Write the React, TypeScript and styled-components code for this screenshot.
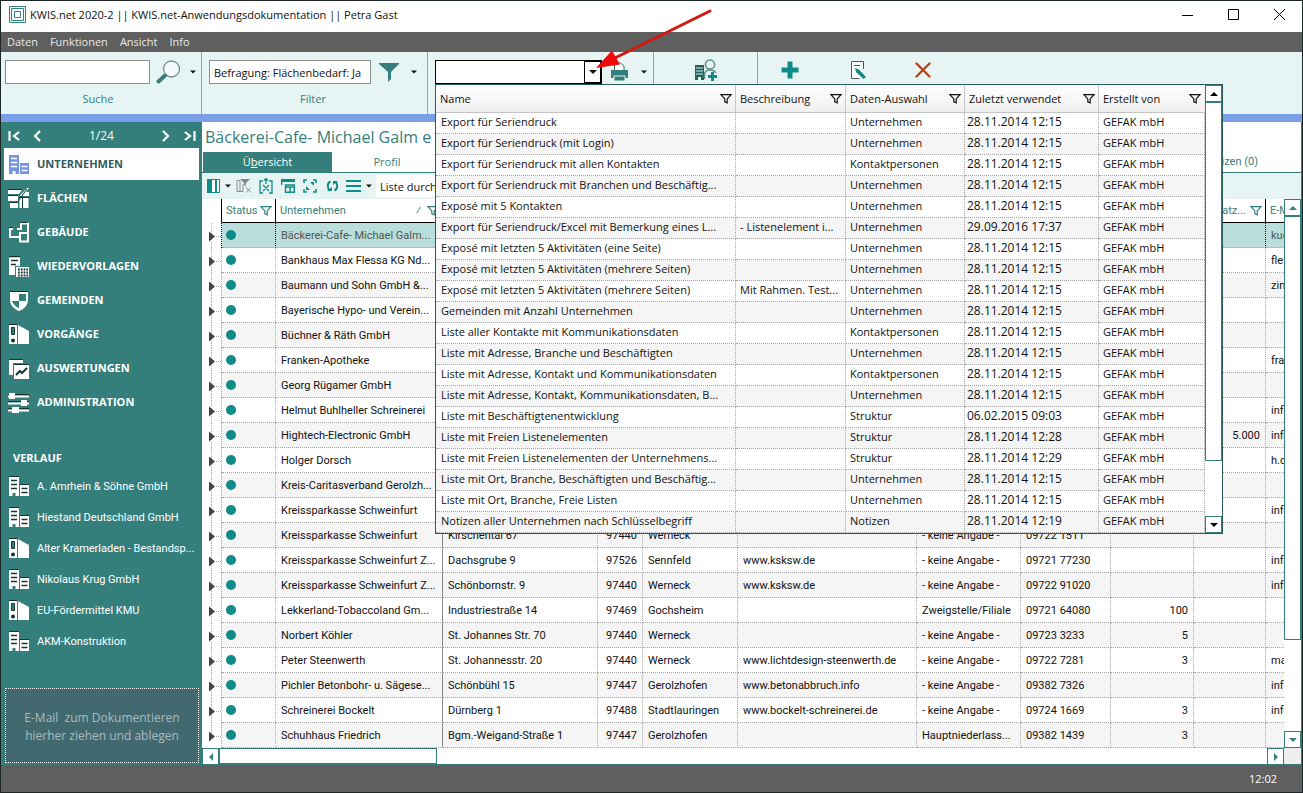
import React from 'react';
import styled, { createGlobalStyle, css } from 'styled-components';

const teal = '#347f7c';
const accent = '#108c88';
const pale = '#e6f5f4';

const Global = createGlobalStyle`
  * { box-sizing: border-box; }
  body { margin: 0; font: 11px/16px 'Open Sans', 'Noto Sans', sans-serif; color: #111; background: #fff; }
  button, input { font: inherit; color: inherit; margin: 0; padding: 0; border: 0; background: none; border-radius: 0; }
  button { cursor: pointer; display: flex; align-items: center; justify-content: center; }
  input:focus { outline: none; }
  svg { display: block; flex: none; }
`;

const Window = styled.div`
  display: flex;
  flex-direction: column;
  min-height: 100vh;
  border: 1px solid #1c2626;
  overflow: hidden;
`;

/* ---------- title and menu ---------- */
const TitleBar = styled.header`
  display: flex;
  align-items: center;
  height: 31px;
  padding: 0 0 4px 8px;
  background: #fff;
`;
const AppTitle = styled.h1`
  flex: 1;
  margin: 0 0 0 4px;
  font-size: 11px;
  font-weight: 400;
`;
const WindowButton = styled.button`
  width: 46px;
  height: 27px;
`;
const MenuBar = styled.nav`
  display: flex;
  align-items: center;
  gap: 12px;
  height: 20px;
  padding-left: 6px;
  background: #5f5f5f;
  color: #e8e8e8;
`;

/* ---------- ribbon ---------- */
const Ribbon = styled.div`
  display: flex;
  height: 62px;
  background: ${pale};
`;
const Group = styled.section<{ $w?: number; $pad?: number }>`
  display: flex;
  flex-direction: column;
  width: ${p => (p.$w ? p.$w + 'px' : 'auto')};
  padding: 8px 0 0 ${p => p.$pad ?? 0}px;
  border-right: ${p => (p.$w ? '1px solid #8fa5a4' : 'none')};
`;
const Controls = styled.div<{ $center?: boolean }>`
  display: flex;
  align-items: center;
  justify-content: ${p => (p.$center ? 'center' : 'flex-start')};
  height: 24px;
`;
const GroupLabel = styled.label`
  padding-right: 10px;
  line-height: 29px;
  text-align: center;
  color: ${teal};
`;
const Field = styled.input<{ $w: number }>`
  width: ${p => p.$w}px;
  height: 24px;
  padding: 0 4px;
  border: 1px solid #8a8f8f;
  background: #fff;
`;
const ToolButton = styled.button<{ $w: number }>`
  width: ${p => p.$w}px;
  height: 24px;
`;
const ActionButton = styled(ToolButton)`
  height: 20px;
  margin-bottom: 4px;
`;
const Combo = styled.div`
  position: relative;
  display: flex;
  width: 167px;
  height: 24px;
  border: 1px solid #000;
  background: #fff;
`;
const ComboInput = styled.input`
  flex: 1;
  min-width: 0;
  padding: 0 4px;
`;
const ComboButton = styled.button`
  width: 17px;
  border: 1px solid #000;
`;
const Pointer = styled.svg`
  position: absolute;
  left: 157px;
  top: -53px;
  z-index: 3;
  pointer-events: none;
`;
const Strip = styled.div`
  height: 8px;
  background: #7a9ee8;
`;

/* ---------- drop-down list ---------- */
const Popup = styled.div`
  position: absolute;
  left: -1px;
  top: 23px;
  z-index: 2;
  display: flex;
  width: 788px;
  border: 1px solid #2a5c5d;
  background: #fff;
`;
const ListTable = styled.table`
  flex: 1;
  table-layout: fixed;
  border-collapse: separate;
  border-spacing: 0;
`;
const ListHead = styled.th`
  height: 28px;
  padding: 0 3px 0 4px;
  border-right: 1px solid #c8c8c8;
  border-bottom: 1px solid #c4c4c4;
  background: linear-gradient(#fff, #f0f0f0);
  font-weight: 400;
  text-align: left;
  &:last-child { border-right-color: #eee; }
`;
const HeadInner = styled.span<{ $end?: boolean }>`
  display: flex;
  align-items: center;
  justify-content: ${p => (p.$end ? 'flex-end' : 'space-between')};
  gap: ${p => (p.$end ? 4 : 0)}px;
`;
const ListRow = styled.tr`
  &:nth-child(even) { background: #f5f5f5; }
`;
const ListCell = styled.td<{ $date?: boolean; $first?: boolean }>`
  height: 21px;
  padding: 0 0 2px ${p => (p.$date ? 2 : p.$first ? 5 : 4)}px;
  border-right: 1px dotted #a5a5a5;
  border-bottom: 1px dotted #a5a5a5;
  font-size: ${p => (p.$date ? 12 : 11)}px;
  line-height: 18px;
  white-space: nowrap;
  overflow: hidden;
`;

/* ---------- scroll bars ---------- */
const VBar = styled.div<{ $c: string }>`
  display: flex;
  flex-direction: column;
  flex: none;
  width: 17px;
  color: ${p => p.$c};
  background: #fff;
`;
const HBar = styled.div`
  display: flex;
  flex: 1;
  color: ${teal};
`;
const BarButton = styled.button`
  width: 17px;
  height: 17px;
  flex: none;
  border: 1px solid ${teal};
  background: #fff;
`;
const Thumb = styled.div<{ $w?: number; $h?: number }>`
  width: ${p => (p.$w ? p.$w + 'px' : 'auto')};
  height: ${p => (p.$h ? p.$h + 'px' : 'auto')};
  border: 1px solid ${teal};
  background: #fff;
`;
const Fill = styled.div`
  flex: 1;
`;

/* ---------- side bar ---------- */
const Body = styled.div`
  display: flex;
  flex: 1;
`;
const Sidebar = styled.aside`
  display: flex;
  flex-direction: column;
  flex: none;
  width: 201px;
  padding: 0 3px 2px;
  background: ${teal};
  color: #fff;
`;
const Pager = styled.div`
  display: flex;
  align-items: center;
  height: 27px;
  padding: 0 2px;
  margin-bottom: -1px;
`;
const PagerButton = styled.button`
  width: 28px;
  height: 20px;
  &:first-child, &:last-child { width: 15px; }
`;
const PageCount = styled.span`
  flex: 1;
  text-align: center;
  font-size: 12px;
`;
const NavList = styled.ul`
  list-style: none;
  margin: 0;
  padding: 0;
`;
const NavLink = styled.a<{ $active?: boolean }>`
  display: flex;
  align-items: center;
  gap: 8px;
  height: 32px;
  margin-bottom: 2px;
  padding-left: 4px;
  font-weight: 700;
  text-decoration: none;
  color: ${p => (p.$active ? '#2f5c5b' : '#fff')};
  background: ${p => (p.$active ? '#fff' : 'transparent')};
`;
const HistoryTitle = styled.h2`
  margin: 30px 0 5px 9px;
  font-size: 11px;
  line-height: 16px;
`;
const HistoryLink = styled(NavLink)`
  height: 31px;
  margin: 0;
  font-family: Roboto, sans-serif;
  font-weight: 400;
  white-space: nowrap;
`;
const DropZone = styled.div`
  margin-top: auto;
  height: 75px;
  margin-left: 1px;
  padding-top: 20px;
  border: 1px dotted #fff;
  background: #42696f;
  color: #a9bcbe;
  font-size: 12px;
  line-height: 18px;
  text-align: center;
  white-space: pre-line;
`;

/* ---------- main area ---------- */
const Main = styled.main`
  display: flex;
  flex-direction: column;
  flex: 1;
  min-width: 0;
  border-right: 1px solid ${teal};
`;
const PageTitle = styled.h2`
  margin: 0;
  padding-left: 3px;
  font-size: 16px;
  font-weight: 400;
  line-height: 30px;
  color: ${teal};
`;
const Tabs = styled.div`
  display: flex;
  height: 21px;
  padding-left: 1px;
  border-bottom: 1px solid ${teal};
`;
const Tab = styled.button<{ $active?: boolean; $w: number; $last?: boolean }>`
  width: ${p => p.$w}px;
  height: 20px;
  color: ${p => (p.$active ? '#fff' : teal)};
  background: ${p => (p.$active ? teal : '#fff')};
  ${p => p.$last && css`
    margin-left: auto;
    margin-right: 43px;
    justify-content: flex-end;
    font-family: Roboto, sans-serif;
  `}
`;
const GridTools = styled.div`
  display: flex;
  align-items: center;
  height: 26px;
  padding-left: 4px;
  background: ${pale};
`;
const GridTool = styled.button<{ $w: number }>`
  width: ${p => p.$w}px;
  height: 22px;
`;
const ListSearch = styled.input`
  width: 200px;
  height: 22px;
  margin-left: 3px;
  padding-left: 4px;
  background: #fff;
`;
const GridArea = styled.div`
  display: flex;
  flex: 1;
`;
const GridClip = styled.div`
  flex: 1;
  min-width: 0;
  overflow: hidden;
`;
const Grid = styled.table`
  width: 100%;
  table-layout: fixed;
  border-collapse: separate;
  border-spacing: 0;
  font-family: Roboto, sans-serif;
`;
const GridHead = styled.th<{ $blank?: boolean }>`
  height: 24px;
  padding: 0 3px 0 4px;
  overflow: hidden;
  font-weight: 400;
  text-align: left;
  white-space: nowrap;
  color: ${teal};
  border-right: 1px solid #000;
  border-bottom: 1px solid ${p => (p.$blank ? '#fff' : '#000')};
  &:last-child { border-right: 0; }
`;
const Sort = styled.span`
  margin: 0 6px 0 auto;
`;
const GridRow = styled.tr<{ $selected?: boolean }>`
  background: ${p => (p.$selected ? '#b9dedb' : '#fff')};
  color: ${p => (p.$selected ? '#555' : '#111')};
  ${p => !p.$selected && css`&:nth-child(odd) { background: #f5f5f5; }`}
`;
const Cell = styled.td<{ $right?: boolean; $dark?: boolean; $solid?: boolean; $mark?: boolean }>`
  height: 25px;
  padding: ${p => (p.$mark ? '0 4px' : '2px 5px 0')};
  overflow: hidden;
  white-space: nowrap;
  text-align: ${p => (p.$right ? 'right' : 'left')};
  border-right: 1px ${p => (p.$solid ? 'solid #888' : p.$dark ? 'dotted #000' : 'dotted #a5a5a5')};
  border-bottom: 1px dotted #a5a5a5;
  &:last-child { border-right: 0; }
`;
const GutterCell = styled.td<{ $dark?: boolean }>`
  height: 25px;
  padding: 0;
  background: #fff;
  border-right: 1px dotted ${p => (p.$dark ? '#000' : '#a5a5a5')};
`;
const BottomBar = styled.div`
  display: flex;
  height: 17px;
  border-bottom: 1px solid ${teal};
`;
const Corner = styled.div`
  width: 17px;
  background: #eee;
`;
const StatusBar = styled.footer`
  display: flex;
  align-items: center;
  justify-content: flex-end;
  height: 27px;
  padding-right: 25px;
  background: #5f5f5f;
  color: #fff;
`;

/* ---------- icons ---------- */
const Caret = ({ dir = 'down', s = 7 }: { dir?: string; s?: number }) => {
  const d: Record<string, string> = { down: 'M0 2h8L4 6Z', up: 'M0 6h8L4 2Z', left: 'M6 0v8L2 4Z', right: 'M2 0v8l4-4Z' };
  return <svg width={s} height={s} viewBox="0 0 8 8"><path d={d[dir]} fill="currentColor" /></svg>;
};
const Funnel = ({ c = 'currentColor' }: { c?: string }) => (
  <svg width="12" height="11" viewBox="0 0 12 11" fill="none" stroke={c} strokeWidth="1.2">
    <path d="M1 1.700h10L7.2 5.900v3.900L4.8 8.8V5.900Z" />
  </svg>
);
const Logo = () => (
  <svg width="17" height="17" viewBox="0 0 17 17" fill="none" stroke={teal}>
    <path d="M.5.500h16v16H.5ZM2.500 2.500h12v12h-12ZM5.500 5.500h6v6h-6Z" />
  </svg>
);
const Magnifier = () => (
  <svg width="24" height="24" viewBox="0 0 24 24">
    <circle cx="15.500" cy="9" r="8" fill="#f4fafa" stroke="#7b8d8d" strokeWidth="1.300" />
    <path d="M9 15.500 2.500 21.500" stroke={teal} strokeWidth="4" strokeLinecap="round" />
  </svg>
);
const BigFunnel = () => (
  <svg width="20" height="19" viewBox="0 0 20 19"><path d="M0 0h20v1l-8 8v7l-3 3V9L0 1Z" fill={teal} /></svg>
);
const Printer = () => (
  <svg width="19" height="20" viewBox="0 0 19 20">
    <path d="M4.500 8V1h6l3.500 3v4" fill="#fff" stroke="#466" />
    <path d="M1 8h17v8H1Z" fill={teal} /><path d="M4 14h11v5H4Z" fill={teal} stroke="#e6f5f4" />
  </svg>
);
const AddContact = () => (
  <svg width="24" height="22" viewBox="0 0 24 22">
    <path d="M1 6h9v15H7v-3H4v3H1Z" fill="#2b5b5a" /><path d="M2 9h7M2 12h7M2 15h7" stroke="#8cc4c1" strokeWidth="1.300" />
    <circle cx="16" cy="5.500" r="4.600" fill="none" stroke="#5f8f8d" strokeWidth="1.500" />
    <path d="M10.500 20v-4c0-3 2-5 5.500-5 3 0 5 1 6 3" fill="none" stroke="#5f8f8d" strokeWidth="1.500" />
    <path d="M18.500 13v9M14 17.500h9" stroke={accent} strokeWidth="3" />
  </svg>
);
const Plus = () => (
  <svg width="18" height="18" viewBox="0 0 18 18"><path d="M9 .5v17M.5 9h17" stroke={accent} strokeWidth="5" /></svg>
);
const Edit = () => (
  <svg width="17" height="20" viewBox="0 0 17 20">
    <path d="M13.500 9V1.500h-12v17h8" fill="#f8ffff" stroke="#555" /><path d="M4 5.500h6" stroke="#555" />
    <path d="M5 8l4 1.500 7 7.500-2.500 2L6 12Z" fill={accent} />
  </svg>
);
const Cross = () => (
  <svg width="16" height="16" viewBox="0 0 16 16"><path d="m1.500 1.500 13 13m0-13-13 13" stroke="#b5451b" strokeWidth="2.400" strokeLinecap="round" /></svg>
);

const Ic = ({ children }: { children: React.ReactNode }) => (
  <svg width="21" height="21" viewBox="0 0 21 21" fill="none">{children}</svg>
);
const dark = '#173534';
const Buildings = ({ active }: { active?: boolean }) => {
  const body = active ? '#7496e2' : '#fff';
  const line = active ? '#fff' : dark;
  return (
    <Ic>
      <path d="M1 1h10v19H7.500v-3h-3v3H1ZM12 9h9v11h-9Z" fill={body} />
      <path d="M3 4.500h6M3 8.500h6M3 12.500h6M13.500 12.500h6M13.500 16.500h6" stroke={line} strokeWidth="1.500" />
      {!active && <path d="M1 .5h10M12 8.500h9" stroke={dark} />}
    </Ic>
  );
};
const Areas = () => (
  <Ic>
    <path d="M0 2h14l-3 4H0ZM0 8h10v5H0ZM2 15h8v5H2ZM11.500 10h9v10h-9ZM11.500 8 19 0h2L18 4h3v4Z" fill="#fff" />
    <path d="M0 1.500h14M0 7.500h10M2 14.500h8M11 9.500h10M14.500 8.500v12M10 13l9-12" stroke={dark} />
  </Ic>
);
const Floorplan = () => (
  <Ic>
    <path d="M5 7H2v8h10v4.500h8V11M9 7h4V1.500h7V12M12 15v-4h8" stroke="#fff" strokeWidth="2" />
    <path d="M1 5.500h4M12 .5h8" stroke={dark} />
  </Ic>
);
const Reminder = () => (
  <Ic>
    <path d="M1 1h11v9H7v9H1Z" fill="#fff" /><path d="M1 .5h11M3 4.500h7M3 8.500h5" stroke={dark} strokeWidth="1.500" />
    <path d="M8 11h13v10H8Z" fill="#fff" />
    <path d="M10 13.500h10M10 16.500h10M10 19.500h10" stroke={dark} strokeWidth="1.800" strokeDasharray="1.800 1" />
  </Ic>
);
const Shield = () => (
  <Ic>
    <path d="M2 2h18v8c0 5-4 9-9 11-5-2-9-6-9-11Z" fill="#fff" />
    <path d="M11 4h7v7h-7v7c-3-1-6-4-7-7h7Z" fill={teal} /><path d="M2 1.500h18" stroke={dark} />
  </Ic>
);
const Binder = () => (
  <Ic>
    <path d="M1 1h8v19H1Z" fill="#fff" /><path d="M10 1l11 6v13H10Z" fill="#fff" />
    <path d="M3.500 3.500h3v7h-3Z" fill={teal} stroke={dark} /><circle cx="5" cy="16.500" r="2" fill={dark} /><path d="M1 .5h8" stroke={dark} />
  </Ic>
);
const Reports = () => (
  <Ic>
    <path d="M1 2h14v3H5v12H1Z" fill="#fff" /><path d="M6 7h15v14H6Z" fill="#fff" />
    <path d="m8 17 4-4 2 2 5-5" stroke={dark} strokeWidth="2" /><path d="M1 1.500h14M6 6.500h15" stroke={dark} />
  </Ic>
);
const Sliders = () => (
  <Ic>
    <path d="M0 4.500h21M0 11.500h21M0 18.500h21" stroke="#fff" strokeWidth="2" />
    <path d="M0 2.500h21M0 9.500h21M0 16.500h21" stroke={dark} />
    <path d="M1 1h6v6H1ZM13 8h6v6h-6ZM4 15h7v6H4Z" fill="#fff" />
  </Ic>
);

const ColumnsIcon = () => (
  <svg width="13" height="14" viewBox="0 0 13 14"><path d="M.5.500h12v13H.5Z" fill="#fff" stroke={accent} /><path d="M0 0h5v14H0ZM8 0h2v14H8Z" fill={accent} /></svg>
);
const ClearFilter = () => (
  <svg width="16" height="14" viewBox="0 0 16 14" fill="none" stroke="#888"><path d="M4 1.500H1v11h3v-11M7 5v7.500h-3" /><path d="M4 0h10l-4 4v3l-2-1V4Z" fill="#888" stroke="none" /><path d="m10 8.500 5 5m0-5-5 5" /></svg>
);
const ExcelIcon = () => (
  <svg width="14" height="16" viewBox="0 0 14 16" fill="none" stroke={accent} strokeWidth="1.300"><path d="M4 3H1v12h3M10 3h3v12h-3M7 0v6M5 2.500l2-2 2 2M4 7l6 6m0-6-6 6" /></svg>
);
const LayoutIcon = () => (
  <svg width="14" height="14" viewBox="0 0 14 14" fill="none" stroke={accent}><path d="M0 0h14v3H0Z" fill={accent} stroke="none" /><path d="M.7.700h12.600M.7 0v6M4.500 13.300V6h8.800v7.300ZM4 8h9M9 8v5" strokeWidth="1.400" /></svg>
);
const ExpandIcon = () => (
  <svg width="14" height="14" viewBox="0 0 14 14"><path d="M1 4V1h3M10 1h3v3M13 10v3h-3M4 13H1v-3" fill="none" stroke={accent} strokeWidth="1.600" /><path d="M7 3h4v4ZM3 7v4h4Z" fill={accent} /></svg>
);
const RefreshIcon = () => (
  <svg width="13" height="14" viewBox="0 0 13 14" fill="none" stroke={accent} strokeWidth="2"><path d="M4.500 2.500C1 4 1 9 4 11.500M8.500 11.500C12 10 12 5 9 2.500" /><path d="M1 12h5V8ZM12 2H7v4Z" fill={accent} stroke="none" /></svg>
);
const ListIcon = () => (
  <svg width="15" height="12" viewBox="0 0 15 12"><path d="M0 1h15M0 6h15M0 11h15" stroke={accent} strokeWidth="2" /></svg>
);
const Dot = () => <svg width="10" height="10" viewBox="0 0 10 10" role="img" aria-label="aktiv"><circle cx="5" cy="5" r="5" fill={accent} /></svg>;
const TreeNode = ({ last }: { last?: boolean }) => (
  <svg width="19" height="25" viewBox="0 0 19 25">
    <path d={last ? 'M9.500 0v13' : 'M9.500 0v25'} stroke="#aaa" strokeDasharray="1 1" />
    <path d="M14 13.500h5" stroke="#aaa" strokeDasharray="1 1" /><path d="M7 8.500v10l6-5Z" fill="#444" />
  </svg>
);
const Chevron = ({ d }: { d: string }) => (
  <svg width="12" height="12" viewBox="0 0 12 12"><path d={d} fill="none" stroke="#fff" strokeWidth="2.200" /></svg>
);

/* ---------- data ---------- */
const nav: [string, React.ReactNode][] = [
  ['UNTERNEHMEN', <Buildings active />], ['FLÄCHEN', <Areas />], ['GEBÄUDE', <Floorplan />], ['WIEDERVORLAGEN', <Reminder />],
  ['GEMEINDEN', <Shield />], ['VORGÄNGE', <Binder />], ['AUSWERTUNGEN', <Reports />], ['ADMINISTRATION', <Sliders />],
];
const history: [string, React.ReactNode][] = [
  ['A. Amrhein & Söhne GmbH', <Buildings />], ['Hiestand Deutschland GmbH', <Buildings />],
  ['Alter Kramerladen - Bestandsp...', <Binder />], ['Nikolaus Krug GmbH', <Buildings />],
  ['EU-Fördermittel KMU', <Binder />], ['AKM-Konstruktion', <Buildings />],
];
const U = 'Unternehmen';
const D = '28.11.2014 12:15';
const lists: [string, string, string, string][] = [
  ['Export für Seriendruck', '', U, D],
  ['Export für Seriendruck (mit Login)', '', U, D],
  ['Export für Seriendruck mit allen Kontakten', '', 'Kontaktpersonen', D],
  ['Export für Seriendruck mit Branchen und Beschäftig...', '', U, D],
  ['Exposé mit 5 Kontakten', '', U, D],
  ['Export für Seriendruck/Excel mit Bemerkung eines L...', '- Listenelement i...', U, '29.09.2016 17:37'],
  ['Exposé mit letzten 5 Aktivitäten (eine Seite)', '', U, D],
  ['Exposé mit letzten 5 Aktivitäten (mehrere Seiten)', '', U, D],
  ['Exposé mit letzten 5 Aktivitäten (mehrere Seiten)', 'Mit Rahmen. Test...', U, D],
  ['Gemeinden mit Anzahl Unternehmen', '', U, D],
  ['Liste aller Kontakte mit Kommunikationsdaten', '', 'Kontaktpersonen', D],
  ['Liste mit Adresse, Branche und Beschäftigten', '', U, D],
  ['Liste mit Adresse, Kontakt und Kommunikationsdaten', '', 'Kontaktpersonen', D],
  ['Liste mit Adresse, Kontakt, Kommunikationsdaten, B...', '', U, D],
  ['Liste mit Beschäftigtenentwicklung', '', 'Struktur', '06.02.2015 09:03'],
  ['Liste mit Freien Listenelementen', '', 'Struktur', '28.11.2014 12:28'],
  ['Liste mit Freien Listenelementen der Unternehmens...', '', 'Struktur', '28.11.2014 12:29'],
  ['Liste mit Ort, Branche, Beschäftigten und Beschäftig...', '', U, D],
  ['Liste mit Ort, Branche, Freie Listen', '', U, D],
  ['Notizen aller Unternehmen nach Schlüsselbegriff', '', 'Notizen', '28.11.2014 12:19'],
];
const K = '- keine Angabe -';
// name, street, postcode, town, web, kind, phone, staff, turnover, e-mail
const rows: string[][] = [
  ['Bäckerei-Cafe- Michael Galm...', '', '', '', '', '', '', '', '', 'kue'],
  ['Bankhaus Max Flessa KG Nd...', '', '', '', '', '', '', '', '', 'fle'],
  ['Baumann und Sohn GmbH &...', '', '', '', '', '', '', '', '', 'zin'],
  ['Bayerische Hypo- und Verein...'],
  ['Büchner & Räth GmbH'],
  ['Franken-Apotheke', '', '', '', '', '', '', '', '', 'fra'],
  ['Georg Rügamer GmbH'],
  ['Helmut Buhlheller Schreinerei', '', '', '', '', '', '', '', '', 'info'],
  ['Hightech-Electronic GmbH', '', '', '', '', '', '', '', '5.000', 'info'],
  ['Holger Dorsch', '', '', '', '', '', '', '', '', 'h.d'],
  ['Kreis-Caritasverband Gerolzh...'],
  ['Kreissparkasse Schweinfurt', '', '', '', '', '', '', '', '', 'info'],
  ['Kreissparkasse Schweinfurt', 'Kirschental 67', '97440', 'Werneck', '', K, '09722 1511'],
  ['Kreissparkasse Schweinfurt Z...', 'Dachsgrube 9', '97526', 'Sennfeld', 'www.ksksw.de', K, '09721 77230', '', '', 'info'],
  ['Kreissparkasse Schweinfurt Z...', 'Schönbornstr. 9', '97440', 'Werneck', 'www.ksksw.de', K, '09722 91020', '', '', 'info'],
  ['Lekkerland-Tobaccoland Gm...', 'Industriestraße 14', '97469', 'Gochsheim', '', 'Zweigstelle/Filiale', '09721 64080', '100'],
  ['Norbert Köhler', 'St. Johannes Str. 70', '97440', 'Werneck', '', K, '09723 3233', '5'],
  ['Peter Steenwerth', 'St. Johannesstr. 20', '97440', 'Werneck', 'www.lichtdesign-steenwerth.de', K, '09722 7281', '3', '', 'ma'],
  ['Pichler Betonbohr- u. Sägese...', 'Schönbühl 15', '97447', 'Gerolzhofen', 'www.betonabbruch.info', K, '09382 7326', '', '', 'info'],
  ['Schreinerei Bockelt', 'Dürnberg 1', '97488', 'Stadtlauringen', 'www.bockelt-schreinerei.de', K, '09724 1669', '3', '', 'info'],
  ['Schuhhaus Friedrich', 'Bgm.-Weigand-Straße 1', '97447', 'Gerolzhofen', '', 'Hauptniederlass...', '09382 1439', '3'],
];
const listCols: [string, number][] = [['Name', 300], ['Beschreibung', 110], ['Daten-Auswahl', 119], ['Zuletzt verwendet', 134], ['Erstellt von', 106]];
const gridCols = [20, 54, 167, 155, 45, 95, 179, 104, 90, 83, 72];
const rightAligned = [2, 7, 8];

const ListPopup = () => (
  <Popup>
    <ListTable>
      <colgroup>{listCols.map(([n, w]) => <col key={n} width={w} />)}</colgroup>
      <thead>
        <tr>{listCols.map(([n]) => <ListHead key={n}><HeadInner>{n}<Funnel c="#111" /></HeadInner></ListHead>)}</tr>
      </thead>
      <tbody>
        {lists.map((r, i) => (
          <ListRow key={i}>
            <ListCell $first>{r[0]}</ListCell><ListCell>{r[1]}</ListCell><ListCell>{r[2]}</ListCell>
            <ListCell $date>{r[3]}</ListCell><ListCell>GEFAK mbH</ListCell>
          </ListRow>
        ))}
      </tbody>
    </ListTable>
    <VBar $c="#000">
      <BarButton aria-label="Nach oben"><Caret dir="up" s={8} /></BarButton>
      <Thumb $h={359} />
      <Fill />
      <BarButton aria-label="Nach unten"><Caret s={8} /></BarButton>
    </VBar>
  </Popup>
);

export default function App() {
  return (
    <Window>
      <Global />
      <TitleBar>
        <Logo />
        <AppTitle>KWIS.net 2020-2 || KWIS.net-Anwendungsdokumentation || Petra Gast</AppTitle>
        <WindowButton aria-label="Minimieren"><svg width="11" height="11"><path d="M0 6.500h11" stroke="#000" /></svg></WindowButton>
        <WindowButton aria-label="Maximieren"><svg width="11" height="11"><path d="M.5.500h10v10H.5Z" fill="none" stroke="#000" /></svg></WindowButton>
        <WindowButton aria-label="Schließen"><svg width="11" height="11"><path d="m0 0 11 11M11 0 0 11" stroke="#000" /></svg></WindowButton>
      </TitleBar>
      <MenuBar>
        {['Daten', 'Funktionen', 'Ansicht', 'Info'].map(m => <button key={m}>{m}</button>)}
      </MenuBar>
      <Ribbon>
        <Group $w={201} $pad={4}>
          <Controls>
            <Field $w={145} id="suche" />
            <ToolButton $w={36} aria-label="Suchen"><Magnifier /></ToolButton>
            <ToolButton $w={14} aria-label="Suchoptionen"><Caret s={6} /></ToolButton>
          </Controls>
          <GroupLabel htmlFor="suche">Suche</GroupLabel>
        </Group>
        <Group $w={226} $pad={7}>
          <Controls>
            <Field $w={162} id="filter" defaultValue="Befragung: Flächenbedarf: Ja" />
            <ToolButton $w={36} aria-label="Filtern"><BigFunnel /></ToolButton>
            <ToolButton $w={14} aria-label="Filteroptionen"><Caret s={6} /></ToolButton>
          </Controls>
          <GroupLabel htmlFor="filter">Filter</GroupLabel>
        </Group>
        <Group $w={226} $pad={7}>
          <Controls>
            <Combo>
              <ComboInput aria-label="Liste auswählen" />
              <ComboButton aria-label="Listen anzeigen"><Caret s={8} /></ComboButton>
              <ListPopup />
              <Pointer width="120" height="70" viewBox="0 0 120 70">
                <path d="M117 3 22 50" stroke="#d3180f" strokeWidth="3" strokeLinecap="round" />
                <path d="M3 60 19 42.500 27 56.500Z" fill="#f00808" />
              </Pointer>
            </Combo>
            <ToolButton $w={34} aria-label="Drucken"><Printer /></ToolButton>
            <ToolButton $w={16} aria-label="Druckoptionen"><Caret s={6} /></ToolButton>
          </Controls>
        </Group>
        <Group $w={104}>
          <Controls $center><ActionButton $w={40} aria-label="Kontakt hinzufügen"><AddContact /></ActionButton></Controls>
        </Group>
        <Group>
          <Controls>
            <ActionButton $w={64} aria-label="Neu"><Plus /></ActionButton>
            <ActionButton $w={72} aria-label="Bearbeiten"><Edit /></ActionButton>
            <ActionButton $w={58} aria-label="Löschen"><Cross /></ActionButton>
          </Controls>
        </Group>
      </Ribbon>
      <Strip />
      <Body>
        <Sidebar>
          <Pager>
            <PagerButton aria-label="Erster"><Chevron d="M1.500 1v10M11 2 6 6l5 4" /></PagerButton>
            <PagerButton aria-label="Zurück"><Chevron d="M11 1 6 6l5 5" /></PagerButton>
            <PageCount>1/24</PageCount>
            <PagerButton aria-label="Weiter"><Chevron d="m1 1 5 5-5 5" /></PagerButton>
            <PagerButton aria-label="Letzter"><Chevron d="M10.500 1v10M1 2l5 4-5 4" /></PagerButton>
          </Pager>
          <NavList>
            {nav.map(([t, icon], i) => <li key={t}><NavLink href="#" $active={i === 0}>{icon}{t}</NavLink></li>)}
          </NavList>
          <HistoryTitle>VERLAUF</HistoryTitle>
          <NavList>
            {history.map(([t, icon]) => <li key={t}><HistoryLink href="#">{icon}{t}</HistoryLink></li>)}
          </NavList>
          <DropZone>{'E-Mail \u00a0zum Dokumentieren\nhierher ziehen und ablegen'}</DropZone>
        </Sidebar>
        <Main>
          <PageTitle>Bäckerei-Cafe- Michael Galm e</PageTitle>
          <Tabs>
            <Tab $active $w={129}>Ü<u>b</u>ersicht</Tab>
            <Tab $w={110}>Profil</Tab>
            <Tab $w={70} $last>Notizen (0)</Tab>
          </Tabs>
          <GridTools>
            <GridTool $w={15} aria-label="Spalten"><ColumnsIcon /></GridTool>
            <GridTool $w={14} aria-label="Spaltenoptionen"><Caret s={6} /></GridTool>
            <GridTool $w={18} aria-label="Filter löschen"><ClearFilter /></GridTool>
            <GridTool $w={26} aria-label="Excel-Export"><ExcelIcon /></GridTool>
            <GridTool $w={18} aria-label="Layout"><LayoutIcon /></GridTool>
            <GridTool $w={26} aria-label="Vollbild"><ExpandIcon /></GridTool>
            <GridTool $w={18} aria-label="Aktualisieren"><RefreshIcon /></GridTool>
            <GridTool $w={24} aria-label="Menü"><ListIcon /></GridTool>
            <GridTool $w={8} aria-label="Menüoptionen"><Caret s={6} /></GridTool>
            <ListSearch aria-label="Liste durchsuchen" defaultValue="Liste durch" />
          </GridTools>
          <GridArea>
            <GridClip>
              <Grid>
                <colgroup>{gridCols.map((w, i) => <col key={i} width={w} />)}<col /></colgroup>
                <thead>
                  <tr>
                    <GridHead $blank />
                    <GridHead><HeadInner>Status<Funnel /></HeadInner></GridHead>
                    <GridHead><HeadInner>Unternehmen<Sort>⁄</Sort><Funnel /></HeadInner></GridHead>
                    <GridHead /><GridHead /><GridHead /><GridHead /><GridHead /><GridHead /><GridHead />
                    <GridHead><HeadInner $end>Umsatz...<Funnel /></HeadInner></GridHead>
                    <GridHead>E-Mail</GridHead>
                  </tr>
                </thead>
                <tbody>
                  {rows.map((r, i) => {
                    const sel = i === 0;
                    return (
                      <GridRow key={i} $selected={sel}>
                        <GutterCell $dark={sel}><TreeNode last={i === rows.length - 1} /></GutterCell>
                        <Cell $dark={sel} $mark><Dot /></Cell>
                        {gridCols.slice(2).concat(0).map((_, c) => (
                          <Cell key={c} $dark={sel} $solid={c === 0} $right={rightAligned.includes(c)}>{r[c]}</Cell>
                        ))}
                      </GridRow>
                    );
                  })}
                </tbody>
              </Grid>
            </GridClip>
            <VBar $c={teal}>
              <BarButton aria-label="Nach oben"><Caret dir="up" s={8} /></BarButton>
              <Thumb $h={424} />
              <Fill />
              <BarButton aria-label="Nach unten"><Caret s={8} /></BarButton>
            </VBar>
          </GridArea>
          <BottomBar>
            <HBar>
              <BarButton aria-label="Nach links"><Caret dir="left" s={8} /></BarButton>
              <Thumb $w={218} />
              <Fill />
              <BarButton aria-label="Nach rechts"><Caret dir="right" s={8} /></BarButton>
            </HBar>
            <Corner />
          </BottomBar>
        </Main>
      </Body>
      <StatusBar>12:02</StatusBar>
    </Window>
  );
}
